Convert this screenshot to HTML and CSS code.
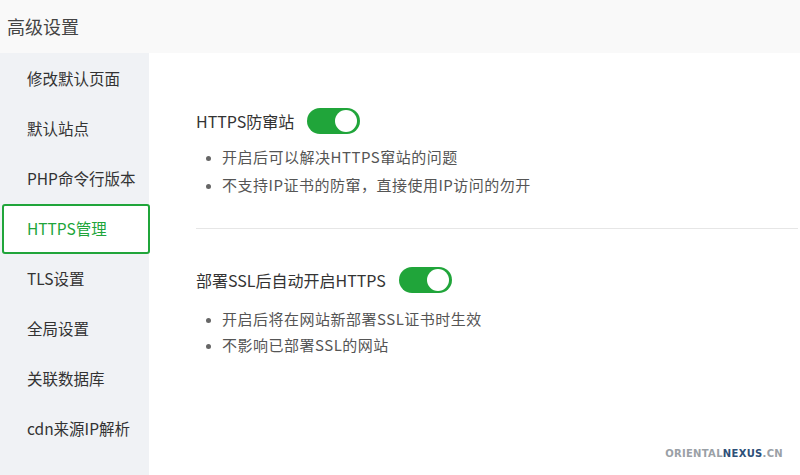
FILE: index.html
```html
<!DOCTYPE html>
<html lang="zh">
<head>
<meta charset="utf-8">
<link rel="stylesheet" href="styles.css">
</head>
<body>
<div class="page">
  <div class="header">高级设置</div>
  <div class="main">
    <div class="sidebar">
      <div class="item">修改默认页面</div>
      <div class="item">默认站点</div>
      <div class="item">PHP命令行版本</div>
      <div class="item active">HTTPS管理</div>
      <div class="item">TLS设置</div>
      <div class="item">全局设置</div>
      <div class="item">关联数据库</div>
      <div class="item">cdn来源IP解析</div>
    </div>
    <div class="content">
      <div class="section first">
        <div class="row"><span class="label">HTTPS防窜站</span><span class="switch"><span class="knob"></span></span></div>
        <ul class="tips">
          <li>开启后可以解决HTTPS窜站的问题</li>
          <li>不支持IP证书的防窜，直接使用IP访问的勿开</li>
        </ul>
      </div>
      <div class="divider"></div>
      <div class="section second">
        <div class="row"><span class="label">部署SSL后自动开启HTTPS</span><span class="switch"><span class="knob"></span></span></div>
        <ul class="tips">
          <li>开启后将在网站新部署SSL证书时生效</li>
          <li>不影响已部署SSL的网站</li>
        </ul>
      </div>
      <div class="watermark"><span class="wm-gray">ORIENTAL</span><span class="wm-blue">NEXUS</span><span class="wm-gray">.CN</span></div>
    </div>
  </div>
</div>
</body>
</html>
```
FILE: styles.css
```css
html, body {
  margin: 0;
  padding: 0;
  background: #ffffff;
}
body {
  font-family: "Noto Sans CJK SC", "Noto Sans", sans-serif;
  color: #333;
  width: 800px;
  height: 475px;
  overflow: hidden;
}
.page {
  display: flex;
  flex-direction: column;
  height: 475px;
}
.header {
  height: 53px;
  background: #f9f9f9;
  font-size: 18px;
  line-height: 52px;
  padding-left: 7px;
  color: #444;
  flex: none;
}
.main {
  flex: 1;
  display: flex;
}
.sidebar {
  width: 149px;
  background: #f0f2f5;
  padding-top: 1px;
  flex: none;
}
.item {
  height: 50px;
  line-height: 48px;
  padding-left: 27px;
  font-size: 15.5px;
  color: #333;
  box-sizing: border-box;
}
.item.active {
  background: #fff;
  border: 2px solid #20a53a;
  border-radius: 3px;
  margin-left: 2px;
  margin-right: -1px;
  padding-left: 23px;
  line-height: 45px;
  color: #20a53a;
}
.content {
  flex: 1;
  position: relative;
  padding-left: 47px;
  padding-right: 2px;
}
.section.first {
  padding-top: 55px;
}
.section.second {
  padding-top: 38px;
}
.row {
  display: flex;
  align-items: center;
  height: 26px;
}
.label {
  font-size: 16px;
  color: #333;
  line-height: 26px;
}
.switch {
  margin-left: 13px;
  width: 53px;
  height: 26px;
  border-radius: 13px;
  background: #20a53a;
  position: relative;
  flex: none;
}
.knob {
  position: absolute;
  right: 3px;
  top: 2px;
  width: 22px;
  height: 22px;
  border-radius: 50%;
  background: #fff;
}
.tips {
  margin: 9px 0 0 0;
  padding: 0 0 0 26px;
  font-size: 15px;
  color: #555;
  line-height: 28px;
  letter-spacing: 0.5px;
}
.second .tips {
  margin-top: 13px;
  line-height: 26px;
}
.tips li::marker {
  color: #666;
  font-size: 12px;
}
.divider {
  margin-top: 29px;
  height: 1px;
  background: #e6e6e6;
}
.watermark {
  position: absolute;
  right: 17px;
  bottom: 16px;
  font-family: "DejaVu Sans", sans-serif;
  font-weight: bold;
  font-size: 10px;
  letter-spacing: 0.3px;
}
.wm-gray {
  color: #9aa0a6;
}
.wm-blue {
  color: #2d4f78;
}
```
